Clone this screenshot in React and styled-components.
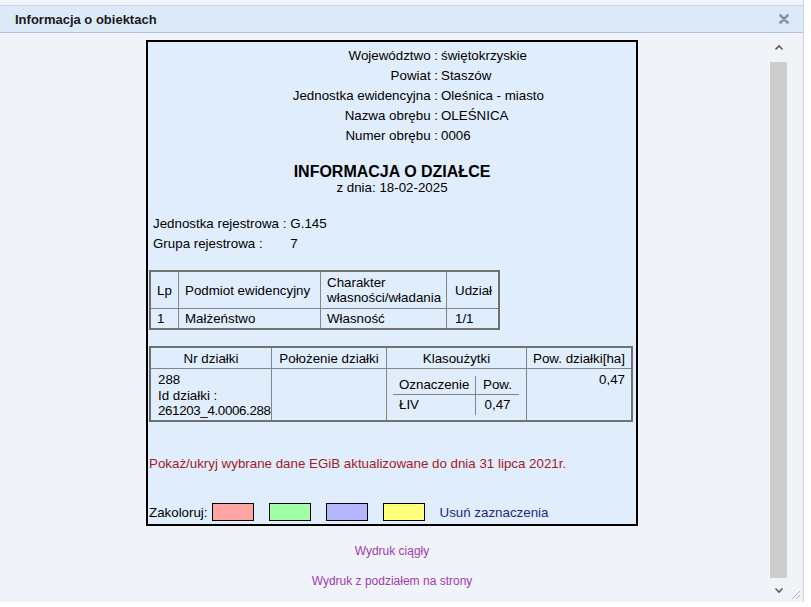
import React from "react";
import styled, { createGlobalStyle } from "styled-components";

const Global = createGlobalStyle`
  html, body { margin: 0; padding: 0; background: #ffffff; }
  body { font-family: "Liberation Sans", Arial, sans-serif; color: #000; }
  * { box-sizing: border-box; }
`;

const Screen = styled.div`
  display: flex;
  width: 811px;
  height: 607px;
  overflow: hidden;
  background: #ffffff;
`;

const Dialog = styled.div`
  position: relative;
  width: 804px;
  height: 602px;
  flex: none;
  display: flex;
  flex-direction: column;
  padding-top: 5px;
  background: #f0f4f9;
  border-right: 1px solid #cdd4dc;
`;

const Header = styled.div`
  height: 28px;
  flex: none;
  display: flex;
  align-items: center;
  justify-content: space-between;
  padding: 0 14px 0 15px;
  background: #dce9f7;
  border-top: 1px solid #c4d7eb;
  border-bottom: 1px solid #adc5de;
`;

const HeaderTitle = styled.div`
  font-size: 13px;
  font-weight: bold;
  color: #1a1a1a;
`;

const Body = styled.div`
  flex: 1;
  display: flex;
  min-height: 0;
`;

const Scroller = styled.div`
  width: 770px;
  flex: none;
  padding-top: 7px;
`;

const Sheet = styled.div`
  margin-left: 146px;
  width: 492px;
  border: 2px solid #000;
  background: #e0edfc;
  padding: 4px 0 3px 0;
  font-size: 13.33px;
`;

const InfoGrid = styled.div`
  display: grid;
  grid-template-columns: 290px auto;
  column-gap: 3px;
  line-height: 20px;
`;

const InfoLabel = styled.div`
  text-align: right;
`;

const TitleBlock = styled.div`
  margin-top: 17px;
  text-align: center;
`;

const MainTitle = styled.div`
  font-size: 16px;
  font-weight: bold;
  line-height: 18px;
`;

const SubTitle = styled.div`
  font-size: 13.33px;
  line-height: 14px;
`;

const RegGrid = styled.div`
  margin-top: 19px;
  padding-left: 5px;
  display: grid;
  grid-template-columns: max-content auto;
  column-gap: 4px;
  line-height: 20px;
`;

const GridTable = styled.div`
  margin-top: ${(p) => p.$top}px;
  margin-left: 1px;
  display: grid;
  width: max-content;
  grid-template-columns: ${(p) => p.$cols};
  grid-template-rows: ${(p) => p.$rows};
  gap: 1px;
  background: #858585;
  border: 2px solid #707070;
`;

const Cell = styled.div`
  background: #e0edfc;
  display: flex;
  flex-direction: column;
  justify-content: ${(p) => (p.$top ? "flex-start" : "center")};
  align-items: ${(p) =>
    p.$align === "center" ? "center" : p.$align === "right" ? "flex-end" : "flex-start"};
  text-align: ${(p) => p.$align || "left"};
  padding: ${(p) => p.$pad || "0 6px"};
  line-height: ${(p) => p.$lh || "15px"};
  white-space: nowrap;
  overflow: hidden;
`;

const TightLine = styled.span`
  letter-spacing: -0.35px;
`;

const Nested = styled.div`
  display: grid;
  grid-template-columns: 83px 43px;
  grid-template-rows: 19px 20px;
  margin-top: 1px;
`;

const NCell = styled.div`
  display: flex;
  align-items: center;
  justify-content: ${(p) => (p.$center ? "center" : "flex-start")};
  padding-left: ${(p) => (p.$center ? 0 : 6)}px;
  border-right: ${(p) => (p.$divider ? "1px solid #858585" : "none")};
  border-bottom: ${(p) => (p.$head ? "1px solid #858585" : "none")};
`;

const Notice = styled.div`
  margin-top: 33px;
  margin-left: 1px;
  line-height: 18px;
  color: #a31b28;
`;

const ColorRow = styled.div`
  margin-top: 30px;
  display: flex;
  align-items: center;
  height: 18px;
  padding-left: 1px;
`;

const ColorLabel = styled.span`
  margin-right: 4px;
`;

const Swatch = styled.span`
  width: 42px;
  height: 18px;
  border: 1px solid #000;
  background: ${(p) => p.$c};
  margin-right: 15px;
`;

const ClearLink = styled.span`
  color: #1b2a8a;
`;

const Links = styled.div`
  margin-left: 146px;
  width: 492px;
  padding-top: 17px;
  display: flex;
  flex-direction: column;
  align-items: center;
  gap: 14px;
  font-size: 12px;
  line-height: 16px;
  color: #a23ab3;
`;

const Scrollbar = styled.div`
  width: 17px;
  flex: none;
  display: flex;
  flex-direction: column;
  align-items: center;
`;

const ArrowBox = styled.div`
  height: ${(p) => p.$h}px;
  width: 17px;
  display: flex;
  align-items: center;
  justify-content: center;
`;

const Thumb = styled.div`
  flex: 1;
  width: 17px;
  background: #cdcdcd;
`;

const Grip = styled.svg`
  position: absolute;
  right: 2px;
  bottom: 2px;
`;

const RightStrip = styled.div`
  flex: 1;
  background: #ffffff;
`;

const Chevron = ({ up }) => (
  <svg width="10" height="7" viewBox="0 0 10 7">
    <path
      d={up ? "M1.5 5.5 L5 2 L8.5 5.5" : "M1.5 1.5 L5 5 L8.5 1.5"}
      fill="none"
      stroke="#5a5a5a"
      strokeWidth="1.6"
    />
  </svg>
);

const CloseIcon = () => (
  <svg width="10" height="10" viewBox="0 0 10 10">
    <path d="M1.5 1.5 L8.5 8.5 M8.5 1.5 L1.5 8.5" stroke="#7d96ad" strokeWidth="2.6" strokeLinecap="round" />
  </svg>
);

const info = [
  ["Województwo :", "świętokrzyskie"],
  ["Powiat :", "Staszów"],
  ["Jednostka ewidencyjna :", "Oleśnica - miasto"],
  ["Nazwa obrębu :", "OLEŚNICA"],
  ["Numer obrębu :", "0006"],
];

const swatches = ["#ffa3a3", "#a3ffa3", "#b4b4ff", "#ffff7a"];

export default function App() {
  return (
    <>
      <Global />
      <Screen>
        <Dialog>
          <Header>
            <HeaderTitle>Informacja o obiektach</HeaderTitle>
            <CloseIcon />
          </Header>
          <Body>
            <Scroller>
              <Sheet>
                <InfoGrid>
                  {info.map(([l, v]) => (
                    <React.Fragment key={l}>
                      <InfoLabel>{l}</InfoLabel>
                      <div>{v}</div>
                    </React.Fragment>
                  ))}
                </InfoGrid>
                <TitleBlock>
                  <MainTitle>INFORMACJA O DZIAŁCE</MainTitle>
                  <SubTitle>z dnia: 18-02-2025</SubTitle>
                </TitleBlock>
                <RegGrid>
                  <div>Jednostka rejestrowa :</div>
                  <div>G.145</div>
                  <div>Grupa rejestrowa :</div>
                  <div>7</div>
                </RegGrid>

                <GridTable $top={16} $cols="27px 141px 125px 51px" $rows="36px 19px">
                  <Cell>Lp</Cell>
                  <Cell>Podmiot ewidencyjny</Cell>
                  <Cell>
                    <span>Charakter</span>
                    <span>własności/władania</span>
                  </Cell>
                  <Cell $pad="0 7px 0 8px">Udział</Cell>
                  <Cell>1</Cell>
                  <Cell>Małżeństwo</Cell>
                  <Cell>Własność</Cell>
                  <Cell $pad="0 7px 0 8px">1/1</Cell>
                </GridTable>

                <GridTable $top={16} $cols="120px 114px 139px 104px" $rows="20px 51px">
                  <Cell $align="center">Nr działki</Cell>
                  <Cell $align="center">Położenie działki</Cell>
                  <Cell $align="center">Klasoużytki</Cell>
                  <Cell $align="center">Pow. działki[ha]</Cell>
                  <Cell $top $pad="3px 0 0 7px" $lh="15.5px">
                    <span>288</span>
                    <span>Id działki :</span>
                    <TightLine>261203_4.0006.288</TightLine>
                  </Cell>
                  <Cell />
                  <Cell $pad="0 7px 0 6px">
                    <Nested>
                      <NCell $head $divider>Oznaczenie</NCell>
                      <NCell $head $center>Pow.</NCell>
                      <NCell $divider>ŁIV</NCell>
                      <NCell $center>0,47</NCell>
                    </Nested>
                  </Cell>
                  <Cell $top $align="right" $pad="3px 6px 0 6px">0,47</Cell>
                </GridTable>

                <Notice>Pokaż/ukryj wybrane dane EGiB aktualizowane do dnia 31 lipca 2021r.</Notice>

                <ColorRow>
                  <ColorLabel>Zakoloruj:</ColorLabel>
                  {swatches.map((c) => (
                    <Swatch key={c} $c={c} />
                  ))}
                  <ClearLink>Usuń zaznaczenia</ClearLink>
                </ColorRow>
              </Sheet>
              <Links>
                <span>Wydruk ciągły</span>
                <span>Wydruk z podziałem na strony</span>
              </Links>
            </Scroller>
            <Scrollbar>
              <ArrowBox $h={29}>
                <Chevron up />
              </ArrowBox>
              <Thumb />
              <ArrowBox $h={24}>
                <Chevron />
              </ArrowBox>
            </Scrollbar>
          </Body>
          <Grip width="12" height="12" viewBox="0 0 12 12">
            <path d="M11 3 L3 11 M11 7 L7 11" stroke="#b0b0b0" strokeWidth="1" />
          </Grip>
        </Dialog>
        <RightStrip />
      </Screen>
    </>
  );
}
